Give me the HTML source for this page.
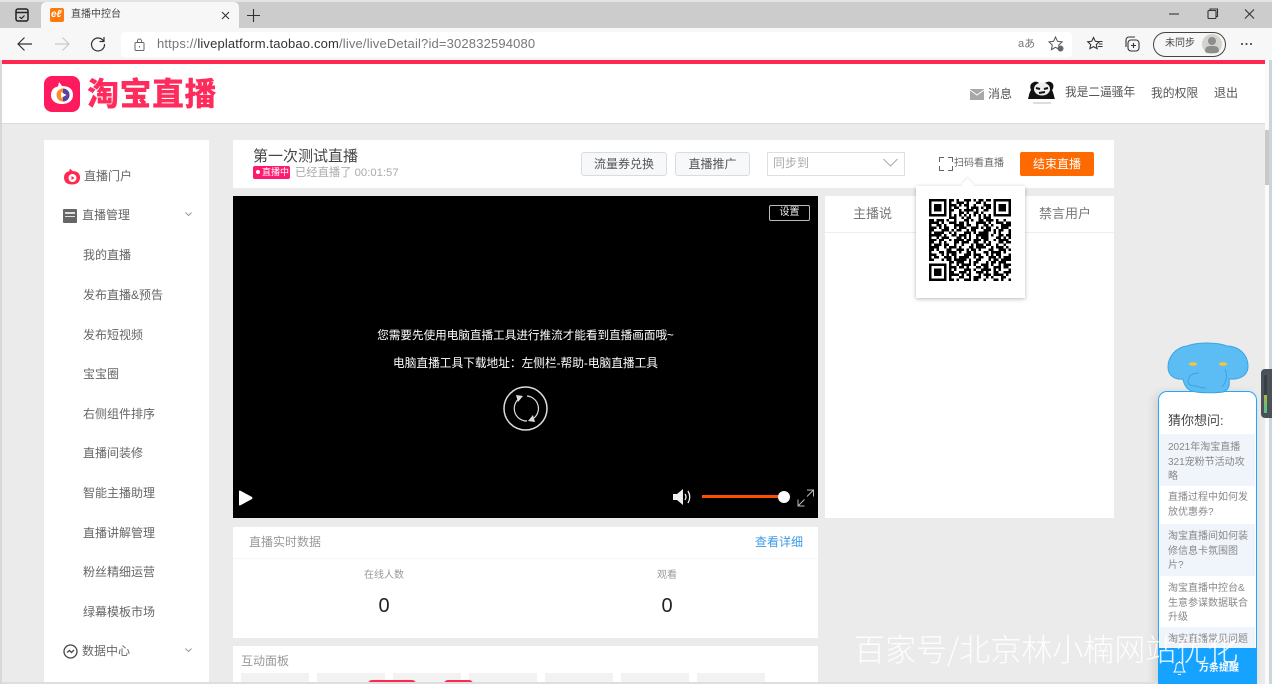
<!DOCTYPE html>
<html lang="zh-CN"><head><meta charset="utf-8"><title>直播中控台</title>
<style>
html,body{margin:0;padding:0;width:1272px;height:684px;overflow:hidden;background:#ebebeb}
body{position:relative;font-family:"Liberation Sans","Noto Sans CJK SC",sans-serif;font-size:12px;color:#555}
.a,.t{position:absolute}
.t{white-space:nowrap;line-height:16px}
.card{position:absolute;background:#fff}
.btn{position:absolute;box-sizing:border-box;background:#f7f8fa;border:1px solid #d8dce2;border-radius:3px;text-align:center;line-height:22px;color:#555;font-size:12px}
svg{position:absolute;overflow:visible}
.tile{position:absolute;top:673px;height:11px;width:68px;background:#f2f2f2}
.nav{left:83px;color:#666}
.q{position:absolute;left:1160px;width:95px;box-sizing:border-box;padding:6px 4px 0 8px;font-size:10px;line-height:14.5px;color:#888}
.alt{background:#f0f4fb}
</style></head><body>

<!-- browser chrome -->
<div class="a" style="left:0;top:0;width:1272px;height:2px;background:#e3e3e3"></div>
<div class="a" style="left:0;top:2px;width:1272px;height:26px;background:#cccccc"></div>
<div class="a" style="left:0;top:28px;width:1272px;height:32px;background:#f7f7f7"></div>
<div class="a" style="left:41px;top:2px;width:198px;height:26px;background:#f7f7f7;border-radius:5px 5px 0 0"></div>
<svg style="left:15px;top:8px" width="14" height="14" viewBox="0 0 14 14" fill="none" stroke="#222" stroke-width="1.5"><rect x="1" y="1" width="12" height="12" rx="2"/><path d="M1 4.500h12"/><path d="M4.500 9l2 1.500 3-3" stroke-width="1.2"/></svg>
<div class="a" style="left:50px;top:8px;width:14px;height:14px;background:#ff7a0d;border-radius:2px"></div>
<div class="t" style="left:51px;top:7px;color:#fff;font-size:10px;font-style:italic;font-weight:bold">eℓ</div>
<div class="t" style="left:71px;top:7px;font-size:10px;color:#444">直播中控台</div>
<svg style="left:221px;top:11px" width="9" height="9" viewBox="0 0 9 9" stroke="#333" stroke-width="1.1"><path d="M1 1l7 7M8 1l-7 7"/></svg>
<svg style="left:247px;top:9px" width="13" height="13" viewBox="0 0 13 13" stroke="#333" stroke-width="1.1"><path d="M6.500 0v13M0 6.500h13"/></svg>
<svg style="left:1168px;top:8px" width="90" height="12" viewBox="0 0 90 12" fill="none" stroke="#333" stroke-width="1.1"><path d="M1 6h10"/><rect x="40" y="2.500" width="8" height="8" rx="1"/><path d="M42 2.500V1h7.500v7.500H48"/><path d="M77 1.500l9 9M86 1.500l-9 9"/></svg>
<svg style="left:17px;top:36px" width="16" height="16" viewBox="0 0 16 16" fill="none" stroke="#333" stroke-width="1.2"><path d="M1 8h14M7.500 1.500L1 8l6.500 6.500"/></svg>
<svg style="left:54px;top:36px" width="16" height="16" viewBox="0 0 16 16" fill="none" stroke="#c8c8c8" stroke-width="1.2"><path d="M1 8h14M8.500 1.500L15 8l-6.500 6.500"/></svg>
<svg style="left:90px;top:36px" width="16" height="16" viewBox="0 0 16 16" fill="none" stroke="#333" stroke-width="1.2"><path d="M13.500 5A6.500 6.500 0 1 0 14.500 8"/><path d="M14 1v4.500H9.500"/></svg>
<div class="a" style="left:121px;top:32px;width:951px;height:25px;background:#fff;border-radius:4px"></div>
<svg style="left:134px;top:38px" width="11" height="13" viewBox="0 0 11 13" fill="none" stroke="#666" stroke-width="1"><rect x="1" y="4.500" width="9" height="8" rx="1"/><path d="M3.500 4.500V3a2 2 0 0 1 4 0v1.500"/><path d="M5.500 8v1.500"/></svg>
<div class="t" style="left:157px;top:36px;font-size:13px;color:#777;letter-spacing:.16px"><span>https://</span><span style="color:#333">liveplatform.taobao.com</span><span>/live/liveDetail?id=302832594080</span></div>
<div class="t" style="left:1018px;top:36px;font-size:11px;color:#777">aあ</div>
<svg style="left:1048px;top:36px" width="16" height="16" viewBox="0 0 16 16" fill="none" stroke="#555" stroke-width="1"><path d="M7.500 1l2 4.300 4.600.6-3.400 3.100.9 4.600-4.100-2.300-4.100 2.300.9-4.600L1 5.900l4.600-.6z"/><circle cx="12.500" cy="12.500" r="3" fill="#666" stroke="none"/></svg>
<svg style="left:1087px;top:36px" width="16" height="16" viewBox="0 0 16 16" fill="none" stroke="#333" stroke-width="1.1"><path d="M6.500 1.500l1.800 3.800 4 .5-3 2.800.8 4-3.600-2-3.600 2 .8-4-3-2.800 4-.5z"/><path d="M12 8h3.500M11 10.500h4.500M12 5.500h3.500"/></svg>
<svg style="left:1124px;top:36px" width="16" height="16" viewBox="0 0 16 16" fill="none" stroke="#333" stroke-width="1.1"><rect x="4" y="4" width="11" height="11" rx="3"/><path d="M2 11V4a3 3 0 0 1 3-3h6"/><path d="M9.500 7v5M7 9.500h5"/></svg>
<div class="a" style="left:1153px;top:32px;width:71px;height:23px;border:1px solid #444;border-radius:13px;background:#f7f7f7"></div>
<div class="t" style="left:1165px;top:36px;font-size:10px;color:#444">未同步</div>
<div class="a" style="left:1202px;top:34px;width:20px;height:20px;border-radius:50%;background:#d4d2ce"></div>
<div class="a" style="left:1208px;top:37px;width:8px;height:8px;border-radius:50%;background:#8d8d8a"></div>
<div class="a" style="left:1205px;top:46px;width:14px;height:7px;border-radius:7px 7px 4px 4px;background:#8d8d8a"></div>
<div class="a" style="left:1241px;top:43px;width:2px;height:2px;background:#333;border-radius:50%;box-shadow:4.500px 0 #333,9px 0 #333"></div>

<!-- page header -->
<div class="a" style="left:0;top:60px;width:2px;height:624px;background:#d8d8d8"></div>
<div class="a" style="left:1265px;top:60px;width:4px;height:624px;background:#fafafa"></div>
<div class="a" style="left:1269px;top:60px;width:3px;height:624px;background:#ccd4dc"></div>
<div class="a" style="left:1265px;top:130px;width:4px;height:55px;background:#c9c9c9"></div>
<div class="a" style="left:2px;top:60px;width:1263px;height:4px;background:#ff2851"></div>
<div class="a" style="left:2px;top:64px;width:1263px;height:59px;background:#fff;border-bottom:1px solid #dcdcdc"></div>
<div class="a" style="left:44px;top:76px;width:36px;height:36px;background:#ff1a5e;border-radius:8px"></div>
<svg style="left:50px;top:80px" width="24" height="28" viewBox="0 0 24 28"><path d="M12 6c7 0 11 3 11 9s-5 9-11 9S1 21 1 15 5 6 12 6z" fill="#fff"/><path d="M9 2l3 4-4 1z" fill="#fff"/><circle cx="13" cy="15" r="6.500" fill="#ff8a2b"/><path d="M13 8.500a6.500 6.500 0 0 1 0 13z" fill="#5a3fa8"/><path d="M11 12l5.500 3-5.500 3z" fill="#fff"/></svg>
<div class="t" style="left:87px;top:76px;font-size:32px;line-height:36px;font-weight:900;color:#ff2b5c;letter-spacing:.5px">淘宝直播</div>

<div class="a" style="left:970px;top:89px;width:14px;height:11px;background:#a8a8a8"></div>
<svg style="left:970px;top:89px" width="14" height="11" fill="none" stroke="#fff" stroke-width="1"><path d="M0 1l7 5 7-5"/></svg>
<div class="t" style="left:988px;top:86px">消息</div>
<svg style="left:1028px;top:80px" width="28" height="26" viewBox="0 0 28 26"><path d="M3 4c3-3 6-3 8-1h6c3-2 6-2 8 1 1 3 0 5-1 6 2 4 2 7 3 9H0c1-3 1-6 3-9-1-2-1-4 0-6z" fill="#111"/><ellipse cx="14" cy="9" rx="8" ry="6.500" fill="#eee"/><path d="M8 8l4 1M16 9l4-1M11 13l6-1" stroke="#111" stroke-width="2"/><path d="M5 23h18" stroke="#bbb" stroke-width="1"/></svg>
<div class="t" style="left:1065px;top:85px;font-size:11.7px">我是二逼骚年</div>
<div class="t" style="left:1151px;top:85px;font-size:11.8px">我的权限</div>
<div class="t" style="left:1214px;top:85px">退出</div>

<!-- sidebar -->
<div class="card" style="left:44px;top:140px;width:165px;height:544px"></div>
<svg style="left:63px;top:168px" width="18" height="18" viewBox="0 0 18 18"><path d="M9 3c5 0 8 2 8 6.500S14 16.500 9 16.500 1 14 1 9.500 4 3 9 3z" fill="#ff2851"/><path d="M7 .5l3 3-4 .5z" fill="#ff2851"/><circle cx="9.500" cy="10" r="4" fill="#fff"/><path d="M8.500 8l3 2-3 2z" fill="#ff2851"/></svg>
<div class="t nav" style="left:84px;top:168px">直播门户</div>
<div class="a" style="left:63px;top:209px;width:14px;height:14px;background:#666;border-radius:1px"></div>
<div class="a" style="left:65px;top:212px;width:10px;height:2px;background:#ddd"></div>
<div class="a" style="left:65px;top:216px;width:10px;height:1px;background:#ddd"></div>
<div class="t nav" style="left:82px;top:207px">直播管理</div>
<svg style="left:185px;top:212px" width="7" height="5" fill="none" stroke="#999"><path d="M.5 .5L3.500 3.500 6.500 .5"/></svg>
<div class="t nav" style="top:247px">我的直播</div>
<div class="t nav" style="top:287px">发布直播&amp;预告</div>
<div class="t nav" style="top:327px">发布短视频</div>
<div class="t nav" style="top:366px">宝宝圈</div>
<div class="t nav" style="top:406px">右侧组件排序</div>
<div class="t nav" style="top:445px">直播间装修</div>
<div class="t nav" style="top:485px">智能主播助理</div>
<div class="t nav" style="top:525px">直播讲解管理</div>
<div class="t nav" style="top:564px">粉丝精细运营</div>
<div class="t nav" style="top:604px">绿幕模板市场</div>
<svg style="left:63px;top:644px" width="15" height="15" viewBox="0 0 15 15" fill="none" stroke="#444" stroke-width="1.300"><circle cx="7.500" cy="7.500" r="6.500"/><path d="M4 8.500l2.500-2 2 2 2.500-2.500"/></svg>
<div class="t nav" style="left:82px;top:643px">数据中心</div>
<svg style="left:185px;top:648px" width="7" height="5" fill="none" stroke="#999"><path d="M.5 .5L3.500 3.500 6.500 .5"/></svg>

<!-- title card -->
<div class="card" style="left:233px;top:140px;width:881px;height:48px"></div>
<div class="t" style="left:253px;top:148px;font-size:15px;line-height:18px;color:#444">第一次测试直播</div>
<div class="a" style="left:253px;top:166px;width:37px;height:13px;background:#ff1a70;border-radius:2px"></div>
<div class="a" style="left:256px;top:170px;width:4px;height:4px;background:#fff;border-radius:50%"></div>
<div class="t" style="left:262px;top:165px;font-size:9px;line-height:15px;color:#fff">直播中</div>
<div class="t" style="left:295px;top:165px;color:#aaa;font-size:11.3px">已经直播了 00:01:57</div>
<div class="btn" style="left:581px;top:152px;width:86px;height:24px">流量券兑换</div>
<div class="btn" style="left:675px;top:152px;width:75px;height:24px">直播推广</div>
<div class="a" style="left:767px;top:152px;width:138px;height:24px;box-sizing:border-box;border:1px solid #dcdfe6;background:#fff"></div>
<div class="t" style="left:773px;top:155px;color:#aaa">同步到</div>
<svg style="left:883px;top:158px" width="15" height="10" fill="none" stroke="#aaa"><path d="M.5 1l7 7 7-7"/></svg>
<svg style="left:938px;top:156px" width="16" height="16" fill="none" stroke="#666"><path d="M1.500 6V1.500h4.500M10 1.500h4.500V6M1.500 10v4.500H6M10 14.500h4.500V10" stroke-width="1"/></svg>
<div class="t" style="left:954px;top:156px;font-size:10px;color:#666">扫码看直播</div>
<div class="a" style="left:1020px;top:152px;width:74px;height:24px;background:#ff6a00;border-radius:2px;color:#fff;text-align:center;line-height:24px">结束直播</div>

<!-- video -->
<div class="a" style="left:233px;top:196px;width:585px;height:322px;background:#000"></div>
<div class="a" style="left:769px;top:205px;width:39px;height:14px;border:1px solid #bbb;border-radius:2px;color:#eee;font-size:10px;line-height:14px;text-align:center">设置</div>
<div class="t" style="left:233px;width:585px;text-align:center;top:328px;color:#fff;font-size:11.6px">您需要先使用电脑直播工具进行推流才能看到直播画面哦~</div>
<div class="t" style="left:233px;width:585px;text-align:center;top:356px;color:#fff;font-size:11.7px">电脑直播工具下载地址：左侧栏-帮助-电脑直播工具</div>
<svg style="left:503px;top:386px" width="45" height="45" viewBox="0 0 45 45" fill="none" stroke="#ddd"><circle cx="22.500" cy="22.500" r="21.500" stroke-width="1.500"/><path d="M17 12A12.500 12.500 0 0 0 24 35M24 10A12.500 12.500 0 0 1 31 32" stroke-width="1.200"/><path d="M13 9l7 1-5 6zM32 36l-7-1 5-6z" fill="#ddd" stroke="none"/></svg>
<svg style="left:239px;top:490px" width="14" height="16"><path d="M0 1.500Q0 0 1.500 .8L13 7q1 1 0 2L1.500 15.200Q0 16 0 14.500z" fill="#fff"/></svg>
<svg style="left:673px;top:488px" width="18" height="18" viewBox="0 0 18 18" fill="none"><path d="M0 6h4l6-5v16l-6-5H0z" fill="#eee"/><path d="M12 6q2 3 0 6M15 3q3.500 6 0 12" stroke="#eee" stroke-width="1.300"/></svg>
<div class="a" style="left:702px;top:495px;width:80px;height:3px;background:#ff4e00"></div>
<div class="a" style="left:778px;top:491px;width:12px;height:12px;border-radius:50%;background:#fff"></div>
<svg style="left:797px;top:489px" width="17" height="18" fill="none" stroke="#bbb" stroke-width="1"><path d="M10 1h6.500v6.500M16.500 1L10 7.500M1 10.500V17h6.500M1 17l6.500-6.500"/></svg>

<!-- right panel -->
<div class="card" style="left:825px;top:196px;width:289px;height:322px"></div>
<div class="a" style="left:825px;top:232px;width:289px;height:1px;background:#eee"></div>
<div class="t" style="left:853px;top:206px;font-size:13px;color:#777">主播说</div>
<div class="t" style="left:1039px;top:206px;font-size:13px;color:#777">禁言用户</div>

<!-- popover -->
<div class="a" style="left:916px;top:186px;width:109px;height:112px;background:#fff;box-shadow:0 1px 4px rgba(0,0,0,.28)"></div>
<div class="a" style="left:963px;top:180px;width:9px;height:9px;background:#fff;transform:rotate(45deg);box-shadow:-1px -1px 2px rgba(0,0,0,.08)"></div>
<div class="a" style="left:916px;top:186px;width:109px;height:10px;background:#fff"></div>
<svg style="left:929px;top:199px" width="82" height="82" viewBox="0 0 33 33" shape-rendering="crispEdges"><g stroke="#000" stroke-width="1" fill="none">
<path d="M8 .5h17" stroke-dasharray="2 1 1 2 3 1 1 1 2 1"/><path d="M8 1.500h17" stroke-dasharray="1 2 3 1 1 3 2 1"/><path d="M8 2.500h17" stroke-dasharray="3 1 1 1 2 2 1 3"/><path d="M8 3.500h17" stroke-dasharray="1 1 2 3 1 1 3 1"/><path d="M8 4.500h17" stroke-dasharray="2 2 1 1 4 1 1 2"/><path d="M8 5.500h17" stroke-dasharray="1 3 2 1 1 2 2 1"/><path d="M8 6.500h17" stroke-dasharray="1 1"/><path d="M8 7.500h17" stroke-dasharray="3 2 1 1 2 3 1 1"/>
<path d="M0 8.500h33" stroke-dasharray="2 1 3 1 1 2 1 3 2 1 1 2"/><path d="M0 9.500h33" stroke-dasharray="4 1 1 2 3 1 2 1 1 3"/><path d="M0 10.500h33" stroke-dasharray="1 2 2 1 1 3 4 1 2 2"/><path d="M0 11.500h33" stroke-dasharray="3 1 1 1 2 2 1 1 3 2"/><path d="M0 12.500h33" stroke-dasharray="2 3 3 1 1 1 2 2 1 1"/><path d="M0 13.500h33" stroke-dasharray="1 1 4 2 1 1 1 3 3 1"/><path d="M0 14.500h33" stroke-dasharray="5 1 1 2 2 1 3 1 1 2"/><path d="M0 15.500h33" stroke-dasharray="1 2 1 1 3 3 2 1 1 1"/><path d="M0 16.500h33" stroke-dasharray="3 1 2 2 1 1 4 1 2 1"/><path d="M0 17.500h33" stroke-dasharray="2 2 1 1 1 3 2 1 3 2"/><path d="M0 18.500h33" stroke-dasharray="1 1 3 1 2 2 1 2 1 3"/><path d="M0 19.500h33" stroke-dasharray="4 2 1 1 3 1 1 3 2 1"/><path d="M0 20.500h33" stroke-dasharray="2 1 1 3 2 2 3 1 1 1"/><path d="M0 21.500h33" stroke-dasharray="1 3 2 1 4 1 1 2 2 1"/><path d="M0 22.500h33" stroke-dasharray="3 2 1 1 1 1 2 3 3 1"/><path d="M0 23.500h33" stroke-dasharray="1 1 2 2 3 1 1 1 4 2"/><path d="M0 24.500h33" stroke-dasharray="2 3 1 1 2 1 5 1 1 2"/>
<path d="M8 25.500h25" stroke-dasharray="2 1 3 2 1 1 2 3 1 1"/><path d="M8 26.500h25" stroke-dasharray="1 2 1 1 4 1 1 2 3 1"/><path d="M8 27.500h25" stroke-dasharray="3 1 2 1 1 3 2 1 2 2"/><path d="M8 28.500h25" stroke-dasharray="1 1 1 3 3 1 1 2 4 1"/><path d="M8 29.500h25" stroke-dasharray="2 2 3 1 1 2 3 1 1 2"/><path d="M8 30.500h25" stroke-dasharray="4 1 1 1 2 3 1 1 3 1"/><path d="M8 31.500h25" stroke-dasharray="1 3 2 2 1 1 3 2 1 1"/><path d="M8 32.500h25" stroke-dasharray="2 1 1 2 3 1 2 2 1 3"/>
</g>
<path fill="#000" fill-rule="evenodd" d="M0 0h7v7H0zM1 1v5h5V1zM2 2h3v3H2zM26 0h7v7h-7zM27 1v5h5V1zM28 2h3v3h-3zM0 26h7v7H0zM1 27v5h5v-5zM2 28h3v3H2z"/></svg>

<!-- data card -->
<div class="card" style="left:233px;top:527px;width:585px;height:111px"></div>
<div class="a" style="left:233px;top:558px;width:585px;height:1px;background:#f6f6f6"></div>
<div class="t" style="left:249px;top:534px;color:#999">直播实时数据</div>
<div class="t" style="left:755px;top:534px;color:#3b9be8">查看详细</div>
<div class="t" style="left:284px;width:200px;text-align:center;top:568px;font-size:10px;color:#999">在线人数</div>
<div class="t" style="left:567px;width:200px;text-align:center;top:568px;font-size:10px;color:#999">观看</div>
<div class="t" style="left:284px;width:200px;text-align:center;top:594px;font-size:20px;line-height:24px;color:#222">0</div>
<div class="t" style="left:567px;width:200px;text-align:center;top:594px;font-size:20px;line-height:24px;color:#222">0</div>

<!-- interaction -->
<div class="card" style="left:233px;top:646px;width:585px;height:38px"></div>
<div class="t" style="left:241px;top:653px;color:#999">互动面板</div>
<div class="tile" style="left:241px"></div><div class="tile" style="left:317px"></div><div class="tile" style="left:393px"></div><div class="tile" style="left:469px"></div><div class="tile" style="left:545px"></div><div class="tile" style="left:621px"></div><div class="tile" style="left:697px"></div>
<div class="a" style="left:368px;top:680px;width:48px;height:4px;background:#ff2851;border-radius:4px 4px 0 0"></div>
<div class="a" style="left:444px;top:680px;width:29px;height:4px;background:#ff2851;border-radius:4px 4px 0 0"></div>

<!-- dark scroll widget -->
<div class="a" style="left:1261px;top:369px;width:11px;height:49px;background:#4b5158;border-radius:4px 0 0 4px"></div>
<div class="a" style="left:1264px;top:375px;width:3px;height:20px;background:#3a3f45"></div>
<div class="a" style="left:1264px;top:395px;width:3px;height:18px;background:linear-gradient(#a8b84a,#4fc08f)"></div>

<!-- assistant -->
<div class="a" style="left:1158px;top:391px;width:97px;height:293px;border:1px solid #22a7ff;border-bottom:0;border-radius:9px 9px 0 0;background:#fff;box-shadow:-3px 2px 10px rgba(0,0,0,.12)"></div>
<svg style="left:1167px;top:343px" width="82" height="50" viewBox="0 0 82 50"><path d="M20 3C9 4 1 14 1 24c0 8 6 13 15 12 1 6 4 12 13 13 8 1 20 1 27 0 6-2 7-7 6-13 10 1 19-3 19-13C81 12 72 3 60 3 50-1 30-1 20 3z" fill="#5cbdf5" stroke="#3aa3e3" stroke-width="1"/><path d="M32 30q-10 0-11 8 0 5 8 5M29 43q4 2 10 2M58 26q4 10-3 18" fill="none" stroke="#3aa3e3"/><ellipse cx="26" cy="21" rx="4" ry="1.700" fill="#ffc42e"/><ellipse cx="56" cy="21" rx="4" ry="1.700" fill="#ffc42e"/></svg>
<div class="t" style="left:1168px;top:413px;font-size:13px;color:#444">猜你想问:</div>
<div class="q alt" style="top:434px;height:52px;padding-top:7px">2021年淘宝直播321宠粉节活动攻略</div>
<div class="q" style="top:486px;height:38px;padding-top:5px">直播过程中如何发放优惠券?</div>
<div class="q alt" style="top:524px;height:52px">淘宝直播间如何装修信息卡氛围图片?</div>
<div class="q" style="top:576px;height:51px">淘宝直播中控台&amp;生意参谋数据联合升级</div>
<div class="q alt" style="top:627px;height:21px;overflow:hidden">淘宝直播常见问题</div>
<div class="a" style="left:1158px;top:648px;width:99px;height:36px;background:#16a3ff"></div>
<svg style="left:1173px;top:660px" width="13" height="16" fill="none" stroke="#fff" stroke-width="1"><path d="M1 12q2-2 2-6a3.500 3.500 0 0 1 7 0q0 4 2 6zM5 14.500h3M6.500 1v1"/></svg>
<div class="t" style="left:1199px;top:661px;font-size:10px;font-weight:bold;color:#fff">万条提醒</div>

<!-- watermark -->
<div class="t" style="left:854px;top:629px;font-size:31px;line-height:38px;color:rgba(255,255,255,.88);font-family:'Noto Sans CJK SC',sans-serif;font-weight:300">百家号/北京林小楠网站优化</div>
<div class="a" style="left:2px;top:682px;width:1156px;height:2px;background:#dedede"></div>
</body></html>
